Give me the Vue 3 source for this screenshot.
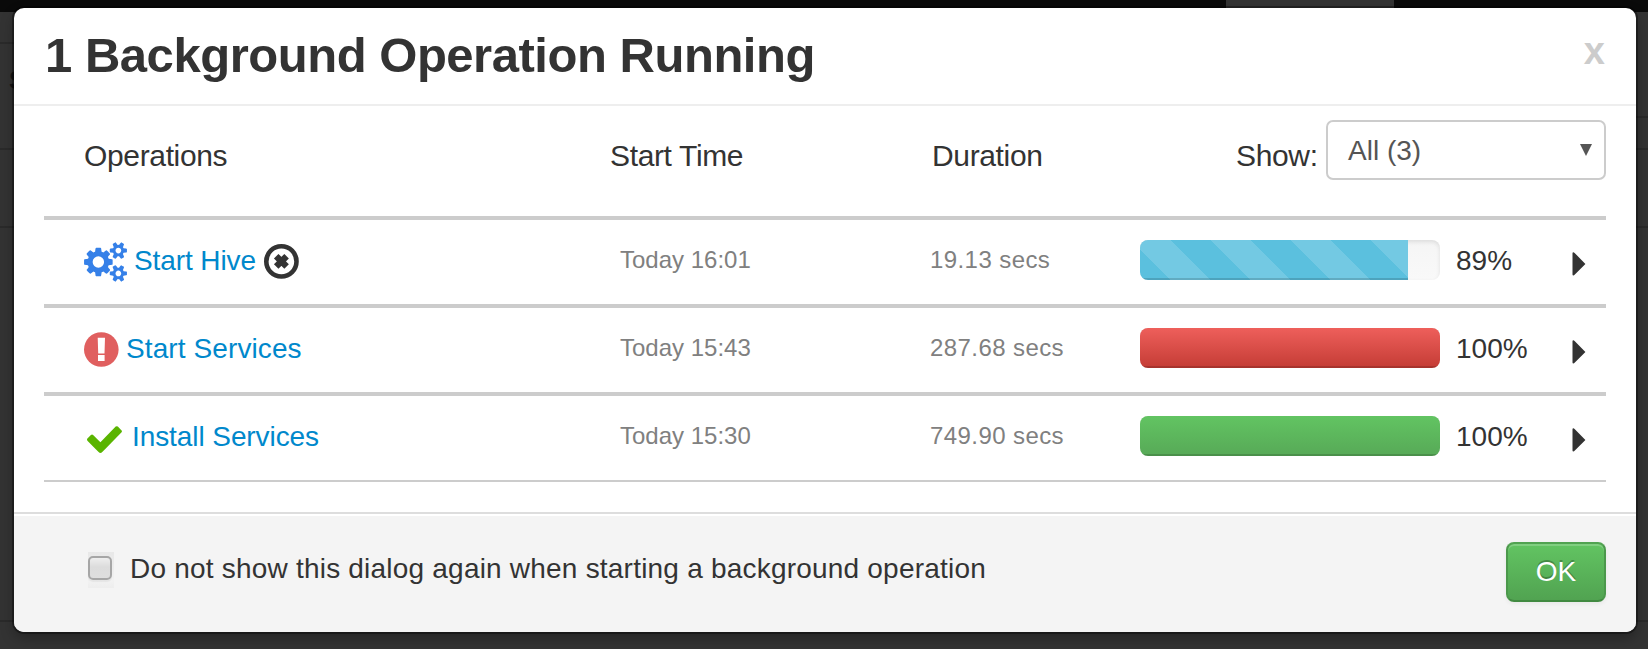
<script setup>
const operations = [
  { name: 'Start Hive', kind: 'running', start: 'Today 16:01', duration: '19.13 secs', percent: 89, fill: 89.3, color: 'info' },
  { name: 'Start Services', kind: 'failed', start: 'Today 15:43', duration: '287.68 secs', percent: 100, fill: 100, color: 'danger' },
  { name: 'Install Services', kind: 'done', start: 'Today 15:30', duration: '749.90 secs', percent: 100, fill: 100, color: 'success' },
]
</script>

<template>
  <div class="page">
    <div class="backdrop">
      <div class="navbar"><div class="tab"></div></div>
      <div class="behind">
        <div class="side left"><i class="a"></i><span class="letter">S</span><i class="b"></i><i class="c"></i><i class="d"></i></div>
        <div class="side right"><i class="a"></i><i class="b"></i><i class="c"></i><i class="d"></i></div>
      </div>
    </div>

    <section class="modal">
      <header class="head">
        <h1>1 Background Operation Running</h1>
        <span class="close">x</span>
      </header>

      <div class="body">
        <div class="columns">
          <span class="c-ops">Operations</span>
          <span class="c-start">Start Time</span>
          <span class="c-dur">Duration</span>
          <span class="c-show">Show:</span>
          <div class="select">
            <span>All (3)</span>
            <svg width="12" height="12" viewBox="0 0 12 12"><path d="M0 0H12L6 12Z" fill="#555" /></svg>
          </div>
        </div>

        <div v-for="op in operations" :key="op.name" class="row">
          <div class="name" :class="op.kind">
            <svg v-if="op.kind === 'running'" class="icon" width="43" height="40" viewBox="0 0 1920 1792">
              <path fill="#3580e8" d="M896 896q0-106-75-181t-181-75-181 75-75 181 75 181 181 75 181-75 75-181zm768 512q0-52-38-90t-90-38-90 38-38 90q0 53 37.5 90.5t90.5 37.5 90.5-37.5 37.5-90.5zm0-1024q0-52-38-90t-90-38-90 38-38 90q0 53 37.5 90.5t90.5 37.5 90.5-37.5 37.5-90.5zm-384 421v185q0 10-7 19.5t-16 10.5l-155 24q-11 35-32 76 34 48 90 115 7 11 7 20 0 12-7 19-23 30-82.5 89.5t-78.5 59.5q-11 0-21-7l-115-90q-37 19-77 31-11 108-23 155-7 24-30 24h-186q-11 0-20-7.5t-10-17.5l-23-153q-34-10-75-31l-118 89q-7 7-20 7-11 0-21-8-144-133-144-160 0-9 7-19 10-14 41-53t47-61q-23-44-35-82l-152-24q-10-1-17-9.5t-7-19.5v-185q0-10 7-19.5t16-10.5l155-24q11-35 32-76-34-48-90-115-7-11-7-20 0-12 7-20 22-30 82-89t79-59q11 0 21 7l115 90q34-18 77-32 11-108 23-154 7-24 30-24h186q11 0 20 7.5t10 17.5l23 153q34 10 75 31l118-89q8-7 20-7 11 0 21 8 144 133 144 160 0 8-7 19-12 16-42 54t-45 60q23 48 34 82l152 23q10 2 17 10.5t7 19.5zm640 533v140q0 16-149 31-12 27-30 52 51 113 51 138 0 4-4 7-122 71-124 71-8 0-46-47t-52-68q-20 2-30 2t-30-2q-14 21-52 68t-46 47q-2 0-124-71-4-3-4-7 0-25 51-138-18-25-30-52-149-15-149-31v-140q0-16 149-31 13-29 30-52-51-113-51-138 0-4 4-7 4-2 35-20t59-34 30-16q8 0 46 46.5t52 67.5q20-2 30-2t30 2q51-71 92-112l6-2q4 0 124 70 4 3 4 7 0 25-51 138 17 23 30 52 149 15 149 31zm0-1024v140q0 16-149 31-12 27-30 52 51 113 51 138 0 4-4 7-122 71-124 71-8 0-46-47t-52-68q-20 2-30 2t-30-2q-14 21-52 68t-46 47q-2 0-124-71-4-3-4-7 0-25 51-138-18-25-30-52-149-15-149-31v-140q0-16 149-31 13-29 30-52-51-113-51-138 0-4 4-7 4-2 35-20t59-34 30-16q8 0 46 46.5t52 67.5q20-2 30-2t30 2q51-71 92-112l6-2q4 0 124 70 4 3 4 7 0 25-51 138 17 23 30 52 149 15 149 31z" />
            </svg>
            <svg v-else-if="op.kind === 'failed'" class="icon" width="35" height="35" viewBox="0 0 35 35">
              <circle cx="17.3" cy="17.5" r="17.3" fill="#e05f5f" />
              <path d="M13.7 5.8H21L20.5 21.4H14.2ZM14 23.1H20.6V29H14Z" fill="#fff" />
            </svg>
            <svg v-else class="icon" width="35" height="28" viewBox="121 302 1550 1220" preserveAspectRatio="none">
              <path fill="#5ab400" d="M1671 566q0 30-18 48l-734 744-146 146q-18 18-58 18t-58-18l-146-146-372-372q-18-18-18-48t18-48l156-156q18-18 48-18t48 18l324 315 676-677q18-18 48-18t48 18l156 156q28 18 28 38z" />
            </svg>
            <a>{{ op.name }}</a>
            <svg v-if="op.kind === 'running'" class="abort" width="35" height="35" viewBox="0 0 35 35">
              <circle cx="17.4" cy="17.4" r="15.1" fill="none" stroke="#333" stroke-width="4.6" />
              <path d="M12.2 12.2L22.6 22.6M22.6 12.2L12.2 22.6" stroke="#333" stroke-width="6.4" />
            </svg>
          </div>
          <span class="start">{{ op.start }}</span>
          <span class="duration">{{ op.duration }}</span>
          <div class="progress"><div class="bar" :class="op.color" :style="{ width: op.fill + '%' }"></div></div>
          <span class="percent">{{ op.percent }}%</span>
          <svg class="caret" width="14" height="24" viewBox="0 0 14 24">
            <path d="M0.5 1.2Q0.5 0.3 1.4 0.3Q2 0.3 2.6 0.9L13.4 12L2.6 22.8Q2 23.5 1.4 23.5Q0.5 23.5 0.5 22.6Z" fill="#333" />
          </svg>
        </div>
      </div>

      <footer class="foot">
        <div class="check"><div class="box"></div></div>
        <span class="label">Do not show this dialog again when starting a background operation</span>
        <button class="ok">OK</button>
      </footer>
    </section>
  </div>
</template>

<style>
body { margin: 0; overflow: hidden; }
</style>

<style scoped>
* { box-sizing: border-box; }
.page {
  position: relative;
  width: 1648px;
  height: 649px;
  overflow: hidden;
  background: #333;
  font-family: "Liberation Sans", Arial, sans-serif;
  color: #333;
  padding: 8px 12px 0 14px;
}
.backdrop { position: absolute; inset: 0; }
.navbar { height: 12px; background: #0a0a0a; padding-left: 1226px; }
.tab { width: 168px; height: 12px; background: #333; }
.behind { display: flex; justify-content: space-between; }
.side { position: relative; width: 30px; height: 637px; }
.side i { position: absolute; left: 0; width: 100%; height: 2px; background: #2a2a2a; }
.left .a { top: 30px; }
.right .a { top: 104px; }
.side .b { top: 136px; }
.side .c { top: 214px; }
.side .d { top: 608px; }
.letter { position: absolute; left: 9px; top: 52px; font-size: 25px; line-height: 32px; font-weight: bold; color: #151515; }

.modal {
  position: relative;
  width: 1622px;
  height: 624px;
  border-radius: 10px;
  background: #fff;
  box-shadow: 0 0 0 2px rgba(0, 0, 0, 0.35), 0 6px 14px rgba(0, 0, 0, 0.3);
  display: flex;
  flex-direction: column;
}
.head {
  height: 98px;
  border-bottom: 2px solid #eee;
  display: flex;
  justify-content: space-between;
  padding: 17px 31px 0 31px;
}
h1 { margin: 0; font-size: 49px; line-height: 60px; font-weight: bold; letter-spacing: -0.47px; white-space: nowrap; }
.close { font-size: 38px; line-height: 52px; font-weight: bold; color: #ccc; }

.body { height: 406px; padding: 0 30px; }
.columns {
  height: 114px;
  border-bottom: 4px solid #ccc;
  padding: 14px 0 0 40px;
  display: grid;
  grid-template-columns: 526px 322px 304px 90px 280px;
  font-size: 30px;
  line-height: 40px;
  white-space: nowrap;
  letter-spacing: -0.35px;
}
.columns > span { padding-top: 16px; }
.select {
  height: 60px;
  border: 2px solid #ccc;
  border-radius: 7px;
  display: flex;
  justify-content: space-between;
  padding: 9px 12px 0 20px;
  font-size: 28px;
  color: #555;
  letter-spacing: 0;
}
.select svg { margin-top: 13px; }

.row {
  height: 88px;
  border-bottom: 4px solid #ccc;
  padding: 20px 0 0 40px;
  display: grid;
  grid-template-columns: 536px 310px 210px 300px 131.5px 14px;
  font-size: 28px;
  line-height: 40px;
  white-space: nowrap;
}
.row:last-child { height: 86px; border-bottom-width: 2px; }
.name { display: flex; align-items: flex-start; }
.name a, .percent { position: relative; top: 1px; }
.name a { color: #08c; letter-spacing: 0.1px; }
.running a { letter-spacing: -0.1px; }
.done a { letter-spacing: -0.08px; }
.running .icon { margin: 1.5px 7px 0 0; }
.running .abort { margin: 4px 0 0 8px; }
.failed .icon { margin: 4px 7px 0 0; }
.done .icon { margin: 8.5px 10.5px 0 2.5px; }
.start, .duration { font-size: 24px; color: #808080; }
.duration { letter-spacing: 0.42px; }
.progress {
  height: 40px;
  border-radius: 8px;
  overflow: hidden;
  background: linear-gradient(#f5f5f5, #f9f9f9);
  box-shadow: inset 0 2px 4px rgba(0, 0, 0, 0.1);
}
.bar { height: 40px; box-shadow: inset 0 -2px 0 rgba(0, 0, 0, 0.15); }
.info {
  background: #5bc0de linear-gradient(45deg, rgba(255, 255, 255, 0.15) 25%, transparent 25%, transparent 50%, rgba(255, 255, 255, 0.15) 50%, rgba(255, 255, 255, 0.15) 75%, transparent 75%);
  background-size: 80px 80px;
  background-position: -9px 0;
}
.danger { background: linear-gradient(#ee5f5b, #c43c35); }
.success { background: linear-gradient(#62c462, #57a957); }
.percent { padding-left: 16px; }
.caret { margin-top: 12px; }

.foot {
  flex: 1;
  background: #f4f4f4;
  border-top: 2px solid #ddd;
  box-shadow: inset 0 2px 0 #fff;
  border-radius: 0 0 10px 10px;
  display: flex;
  align-items: flex-start;
  padding: 28px 30px 0 74px;
}
.check {
  width: 26px;
  height: 36px;
  margin-top: 10px;
  padding-top: 4px;
  background: linear-gradient(#e8e8e8, #ececec 40%, #f2f2f2 80%, #eee);
}
.box {
  width: 24px;
  height: 24px;
  border: 2px solid #a6a6a6;
  border-radius: 5px;
  background: linear-gradient(#eee, #dcdcdc 45%, #dedede);
  box-shadow: 0 2px 1px rgba(0, 0, 0, 0.05);
}
.label { margin: 7px 0 0 16px; font-size: 28px; line-height: 40px; letter-spacing: 0.21px; white-space: nowrap; flex: 1; }
.ok {
  width: 100px;
  height: 60px;
  padding: 0;
  border: 2px solid;
  border-color: #51a351 #4b984b #418a41;
  border-radius: 8px;
  background: linear-gradient(#62c462, #51a351);
  box-shadow: inset 0 2px 0 rgba(255, 255, 255, 0.2), 0 2px 4px rgba(0, 0, 0, 0.05);
  color: #fff;
  font-family: inherit;
  font-size: 28px;
  line-height: 40px;
  text-shadow: 0 -2px 0 rgba(0, 0, 0, 0.25);
}
</style>
